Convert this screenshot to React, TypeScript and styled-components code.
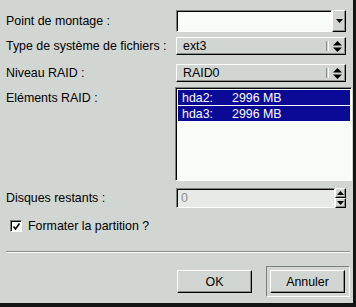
import React from "react";
import styled, { createGlobalStyle } from "styled-components";

const Global = createGlobalStyle`
  html, body { margin: 0; padding: 0; background: #d2d6d2; }
  #root { width: 356px; height: 307px; }
`;

const BG = "#d2d6d2";

const Window = styled.div`
  width: 356px;
  height: 307px;
  box-sizing: border-box;
  background: ${BG};
  border-right: 3px solid #141414;
  border-bottom: 4px solid #141414;
  display: flex;
  flex-direction: column;
  padding: 10px 0 0 6px;
  font-family: "Liberation Sans", Arial, Helvetica, sans-serif;
  font-size: 12.4px;
  color: #000;
`;

const Row = styled.div<{ $mt?: number; $align?: string }>`
  display: grid;
  grid-template-columns: 170px auto;
  align-items: ${(p) => p.$align || "center"};
  margin-top: ${(p) => p.$mt ?? 0}px;
`;

const Label = styled.span<{ $pt?: number }>`
  white-space: nowrap;
  padding-top: ${(p) => p.$pt ?? 0}px;
`;

const Combo = styled.div`
  display: flex;
  width: 170px;
  height: 22px;
`;

const Entry = styled.div<{ $bg?: string }>`
  flex: 1;
  box-sizing: border-box;
  background: ${(p) => p.$bg || "#f8fcf8"};
  border-top: 1px solid #7c807c;
  border-left: 1px solid #7c807c;
  border-bottom: 1px solid #ffffff;
  border-right: 1px solid #ffffff;
  box-shadow: inset 1px 1px 0 #000;
  display: flex;
  align-items: center;
  padding-left: 4px;
  color: #8c8c8c;
`;

const Raised = styled.div`
  box-sizing: border-box;
  background: ${BG};
  border-top: 1px solid #ffffff;
  border-left: 1px solid #ffffff;
  border-bottom: 1px solid #000;
  border-right: 1px solid #000;
  box-shadow: inset -1px -1px 0 #8a8e8a;
`;

const ArrowBtn = styled(Raised)`
  width: 14px;
  display: flex;
  align-items: center;
  justify-content: center;
`;

const OptionMenu = styled(Raised)`
  width: 170px;
  height: 18px;
  display: flex;
  align-items: center;
  padding: 0 3px 0 6px;
`;

const OptionText = styled.span`
  flex: 1;
`;

const Indicator = styled.span`
  width: 1px;
  height: 10px;
  border-left: 1px solid #8a8e8a;
  border-right: 1px solid #ffffff;
  margin-right: 4px;
`;

const List = styled.div`
  width: 177px;
  height: 94px;
  margin-left: -1px;
  box-sizing: border-box;
  background: #f8fcf8;
  border-top: 1px solid #7c807c;
  border-left: 1px solid #7c807c;
  border-bottom: 1px solid #ffffff;
  border-right: 1px solid #ffffff;
  box-shadow: inset 1px 1px 0 #000;
  padding: 2px 1px 0 2px;
  display: flex;
  flex-direction: column;
  gap: 1px;
`;

const ListRow = styled.div`
  height: 15px;
  background: #0a0a96;
  color: #ffffff;
  display: grid;
  grid-template-columns: 50px auto;
  align-items: center;
  padding-left: 4px;
`;

const Spin = styled.div`
  display: flex;
  width: 170px;
  height: 20px;
`;

const SpinBtns = styled.div`
  width: 11px;
  display: flex;
  flex-direction: column;
`;

const SpinHalf = styled(Raised)`
  flex: 1;
  display: flex;
  align-items: center;
  justify-content: center;
`;

const CheckRow = styled.label`
  display: flex;
  align-items: center;
  gap: 6px;
  margin: 11px 0 0 4px;
`;

const CheckBox = styled.span`
  width: 12px;
  height: 12px;
  box-sizing: border-box;
  background: #f8fcf8;
  border-top: 1px solid #7c807c;
  border-left: 1px solid #7c807c;
  border-bottom: 1px solid #ffffff;
  border-right: 1px solid #ffffff;
  box-shadow: inset 1px 1px 0 #000;
  display: flex;
  align-items: center;
  justify-content: center;
`;

const Separator = styled.div`
  margin-top: 18px;
  margin-right: 3px;
  height: 0;
  border-top: 1px solid #8a8e8a;
  border-bottom: 1px solid #ffffff;
`;

const ButtonBar = styled.div`
  display: flex;
  justify-content: flex-end;
  align-items: center;
  gap: 14px;
  margin-top: 13px;
  margin-right: 3px;
`;

const Button = styled(Raised)`
  width: 75px;
  height: 23px;
  display: flex;
  align-items: center;
  justify-content: center;
`;

const DefaultFrame = styled.div`
  box-sizing: border-box;
  padding: 3px 4px 3px 3px;
  border-top: 1px solid #7c807c;
  border-left: 1px solid #7c807c;
  border-bottom: 1px solid #ffffff;
  border-right: 1px solid #ffffff;
`;

const Down = () => (
  <svg width="7" height="4" viewBox="0 0 7 4">
    <polygon points="0,0 7,0 3.5,4" fill="#000" />
  </svg>
);

const Up = () => (
  <svg width="7" height="4" viewBox="0 0 7 4">
    <polygon points="0,4 7,4 3.5,0" fill="#000" />
  </svg>
);

const UpDown = () => (
  <svg width="9" height="11" viewBox="0 0 9 11">
    <polygon points="0,4.5 9,4.5 4.5,0" fill="#000" />
    <polygon points="0,6.5 9,6.5 4.5,11" fill="#000" />
  </svg>
);

const Check = () => (
  <svg width="9" height="9" viewBox="0 0 9 9">
    <polyline points="1.5,4.5 3.5,7 7.5,1.5" fill="none" stroke="#000" strokeWidth="1.6" />
  </svg>
);

export default function App() {
  return (
    <>
      <Global />
      <Window>
        <Row>
          <Label>Point de montage :</Label>
          <Combo>
            <Entry />
            <ArrowBtn>
              <Down />
            </ArrowBtn>
          </Combo>
        </Row>
        <Row $mt={5}>
          <Label>Type de système de fichiers :</Label>
          <OptionMenu>
            <OptionText>ext3</OptionText>
            <Indicator />
            <UpDown />
          </OptionMenu>
        </Row>
        <Row $mt={9}>
          <Label>Niveau RAID :</Label>
          <OptionMenu>
            <OptionText>RAID0</OptionText>
            <Indicator />
            <UpDown />
          </OptionMenu>
        </Row>
        <Row $mt={5} $align="start">
          <Label $pt={4}>Eléments RAID :</Label>
          <List>
            <ListRow>
              <span>hda2:</span>
              <span>2996 MB</span>
            </ListRow>
            <ListRow>
              <span>hda3:</span>
              <span>2996 MB</span>
            </ListRow>
          </List>
        </Row>
        <Row $mt={7}>
          <Label>Disques restants :</Label>
          <Spin>
            <Entry $bg="#e8eae8">0</Entry>
            <SpinBtns>
              <SpinHalf>
                <Up />
              </SpinHalf>
              <SpinHalf>
                <Down />
              </SpinHalf>
            </SpinBtns>
          </Spin>
        </Row>
        <CheckRow>
          <CheckBox>
            <Check />
          </CheckBox>
          <span>Formater la partition ?</span>
        </CheckRow>
        <Separator />
        <ButtonBar>
          <Button>OK</Button>
          <DefaultFrame>
            <Button>Annuler</Button>
          </DefaultFrame>
        </ButtonBar>
      </Window>
    </>
  );
}
